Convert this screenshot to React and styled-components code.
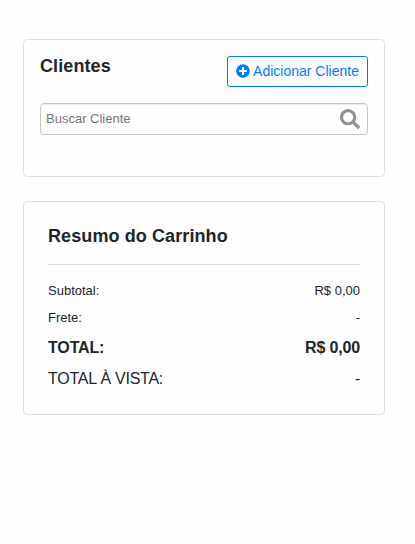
import React from "react";
import styled, { createGlobalStyle } from "styled-components";
import { FaPlusCircle, FaSearch } from "react-icons/fa";

const GlobalStyle = createGlobalStyle`
  *, *::before, *::after { box-sizing: border-box; }
  body {
    margin: 0;
    background: #fefefe;
    color: #212529;
    font-family: "Liberation Sans", Arial, sans-serif;
  }
`;

const Page = styled.main`
  display: flex;
  flex-direction: column;
  gap: 24px;
  min-height: 544px;
  padding: 39px 30px 0 23px;
`;

const Card = styled.section`
  height: ${(p) => p.$height}px;
  padding: ${(p) => p.$padding};
  border: 1px solid #dfdfdf;
  border-radius: 4px;
`;

const CardHeader = styled.header`
  display: flex;
  justify-content: space-between;
  align-items: flex-start;
`;

const Title = styled.h2`
  margin: 0;
  font-size: 18px;
  line-height: 20px;
  font-weight: 700;
  letter-spacing: 0.1px;
`;

const AddButton = styled.button`
  display: flex;
  align-items: center;
  justify-content: center;
  gap: 3px;
  width: 141px;
  height: 31px;
  padding: 0;
  border: 1px solid #007bff;
  border-radius: 3px;
  background: transparent;
  color: #007bff;
  font: 14px/21px "Liberation Sans", Arial, sans-serif;
  white-space: nowrap;

  svg { margin-bottom: 2px; }
`;

const SearchBox = styled.label`
  display: flex;
  align-items: center;
  height: 32px;
  margin-top: 16px;
  padding: 0 7px 0 5px;
  border: 1px solid #c6c6c6;
  border-radius: 4px;
  box-shadow: inset 0 1px 1px rgba(0, 0, 0, 0.075);
  color: #929292;
`;

const SearchInput = styled.input`
  flex: 1;
  min-width: 0;
  padding: 0;
  border: 0;
  outline: 0;
  background: transparent;
  font: 13px/16px "Liberation Sans", Arial, sans-serif;
  &::placeholder { color: #757575; opacity: 1; }
`;

const Divider = styled.hr`
  margin: 18px 0 15px;
  border: 0;
  border-top: 1px solid #dfdfdf;
`;

const SummaryRow = styled.div`
  display: flex;
  justify-content: space-between;
  align-items: center;
  height: ${(p) => p.$height}px;
  font-size: ${(p) => (p.$large ? 16 : 13)}px;
  font-weight: ${(p) => (p.$bold ? 700 : 400)};
  letter-spacing: ${(p) => p.$tracking || 0}px;
`;

export default function App() {
  return (
    <>
      <GlobalStyle />
      <Page>
        <Card $height={138} $padding="16px">
          <CardHeader>
            <Title>Clientes</Title>
            <AddButton type="button">
              <FaPlusCircle size={14} />
              Adicionar Cliente
            </AddButton>
          </CardHeader>
          <SearchBox>
            <SearchInput placeholder="Buscar Cliente" />
            <FaSearch size={20} />
          </SearchBox>
        </Card>
        <Card $height={214} $padding="24px">
          <Title>Resumo do Carrinho</Title>
          <Divider />
          <SummaryRow $height={20}><span>Subtotal:</span><span>R$ 0,00</span></SummaryRow>
          <SummaryRow $height={34}><span>Frete:</span><span>-</span></SummaryRow>
          <SummaryRow $height={28} $large $bold $tracking={-0.15}><span>TOTAL:</span><span>R$ 0,00</span></SummaryRow>
          <SummaryRow $height={34} $large $tracking={-0.25}><span>TOTAL À VISTA:</span><span>-</span></SummaryRow>
        </Card>
      </Page>
    </>
  );
}
